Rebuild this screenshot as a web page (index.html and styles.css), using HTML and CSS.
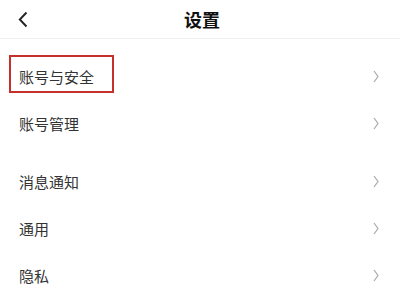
FILE: index.html
```html
<!DOCTYPE html>
<html lang="zh-CN">
<head>
<meta charset="utf-8">
<link rel="stylesheet" href="styles.css">
</head>
<body>
<div class="page">
  <header class="topbar">
    <span class="back">
      <svg width="10" height="17" viewBox="0 0 10 17"><path d="M8.5 1.5 L1.8 8.5 L8.5 15.5" fill="none" stroke="#222" stroke-width="1.9"/></svg>
    </span>
    <h1 class="title">设置</h1>
  </header>
  <div class="group">
    <div class="row"><span class="label">账号与安全</span><span class="arrow"><svg width="6" height="13" viewBox="0 0 6 13"><path d="M1 1 L5 6.5 L1 12" fill="none" stroke="#a8a8a8" stroke-width="1.2"/></svg></span></div>
    <div class="row"><span class="label">账号管理</span><span class="arrow"><svg width="6" height="13" viewBox="0 0 6 13"><path d="M1 1 L5 6.5 L1 12" fill="none" stroke="#a8a8a8" stroke-width="1.2"/></svg></span></div>
  </div>
  <div class="group">
    <div class="row"><span class="label">消息通知</span><span class="arrow"><svg width="6" height="13" viewBox="0 0 6 13"><path d="M1 1 L5 6.5 L1 12" fill="none" stroke="#a8a8a8" stroke-width="1.2"/></svg></span></div>
    <div class="row"><span class="label">通用</span><span class="arrow"><svg width="6" height="13" viewBox="0 0 6 13"><path d="M1 1 L5 6.5 L1 12" fill="none" stroke="#a8a8a8" stroke-width="1.2"/></svg></span></div>
    <div class="row"><span class="label">隐私</span><span class="arrow"><svg width="6" height="13" viewBox="0 0 6 13"><path d="M1 1 L5 6.5 L1 12" fill="none" stroke="#a8a8a8" stroke-width="1.2"/></svg></span></div>
  </div>
  <div class="highlight"></div>
</div>
</body>
</html>
```
FILE: styles.css
```css
html, body {
  margin: 0;
  padding: 0;
  background: #fff;
}
.page {
  position: relative;
  width: 400px;
  height: 293px;
  overflow: hidden;
  font-family: "Noto Sans CJK SC", "Noto Sans", sans-serif;
  color: #333;
}
.topbar {
  height: 38px;
  border-bottom: 1px solid #f0f0f0;
  display: flex;
  align-items: center;
  justify-content: center;
  position: relative;
}
.back {
  position: absolute;
  left: 18px;
  top: 11px;
  display: flex;
}
.title {
  margin: 0;
  font-size: 18px;
  font-weight: 700;
  color: #111;
  line-height: 1;
  margin-left: 4px;
}
.group {
  margin-top: 11px;
}
.group:first-of-type {
  margin-top: 14px;
}
.row {
  height: 47px;
  display: flex;
  align-items: center;
  justify-content: space-between;
  padding: 0 21px 0 19px;
}
.label {
  font-size: 15px;
  line-height: 1;
  color: #333;
}
.arrow {
  display: flex;
}
.highlight {
  position: absolute;
  left: 9px;
  top: 55px;
  width: 101px;
  height: 34px;
  border: 2px solid #c4312b;
}
```
